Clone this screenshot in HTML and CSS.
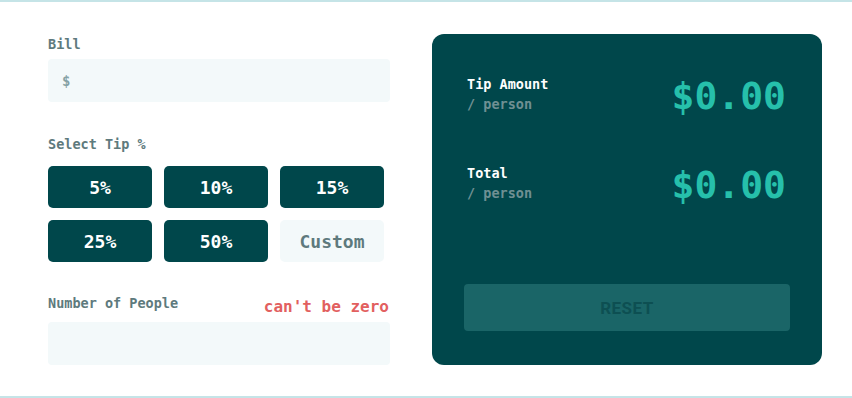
FILE: index.html
```html
<!DOCTYPE html>
<html>
<head>
  <meta charset="utf-8">
  <meta name="viewport" content="width=device-width, initial-scale=1">
  <title>Splitter</title>
  <link rel="stylesheet" href="styles.css">
</head>
<body>
  <main class="card">
    <form class="inputs">
      <label class="label" for="bill">Bill</label>
      <div class="field">
        <span class="prefix">$</span>
        <input id="bill" type="text">
      </div>

      <p class="label tip-label">Select Tip %</p>
      <div class="tips">
        <button type="button" class="tip">5%</button>
        <button type="button" class="tip">10%</button>
        <button type="button" class="tip">15%</button>
        <button type="button" class="tip">25%</button>
        <button type="button" class="tip">50%</button>
        <button type="button" class="tip custom">Custom</button>
      </div>

      <div class="people-head">
        <label class="label" for="people">Number of People</label>
        <span class="error">can't be zero</span>
      </div>
      <div class="field">
        <input id="people" type="text">
      </div>
    </form>

    <section class="result">
      <div class="row">
        <div>
          <b>Tip Amount</b>
          <span>/ person</span>
        </div>
        <strong class="amount">$0.00</strong>
      </div>
      <div class="row">
        <div>
          <b>Total</b>
          <span>/ person</span>
        </div>
        <strong class="amount">$0.00</strong>
      </div>
      <button type="button" class="reset">RESET</button>
    </section>
  </main>
</body>
</html>
```

FILE: styles.css
```css
body {
  margin: 0;
  background: #c5e4e7;
  font-family: 'DejaVu Sans Mono', 'Liberation Mono', monospace;
}

.card {
  margin-top: 2px;
  height: 394px;
  box-sizing: border-box;
  background: #fff;
  padding: 32px 30px 0 48px;
  display: grid;
  grid-template-columns: 342px 390px;
  gap: 42px;
  align-items: start;
}

.inputs {
  display: flex;
  flex-direction: column;
}

.label {
  margin: 0;
  font-size: 13.5px;
  font-weight: bold;
  line-height: 20px;
  color: #5e7a7d;
}

.field {
  margin-top: 5px;
  height: 43px;
  background: #f3f9fa;
  border-radius: 4px;
  display: flex;
  align-items: center;
  padding: 0 14px;
}

.field input {
  flex: 1;
  border: 0;
  background: transparent;
  outline: none;
}

.prefix {
  color: #85a2a5;
  font-size: 14px;
  font-weight: bold;
}

.tip-label {
  margin-top: 32px;
}

.tips {
  margin-top: 12px;
  display: grid;
  grid-template-columns: repeat(3, 104px);
  grid-auto-rows: 42px;
  gap: 12px;
}

.tip {
  border: 0;
  border-radius: 5px;
  background: #00474b;
  color: #fff;
  font-family: inherit;
  font-size: 18px;
  font-weight: bold;
  padding: 0;
}

.tip.custom {
  background: #f3f9fa;
  color: #5e7a7d;
}

.people-head {
  margin-top: 31px;
  display: flex;
  justify-content: space-between;
  align-items: flex-start;
}

.people-head + .field {
  margin-top: 5px;
}

.error {
  color: #e2605f;
  font-size: 16px;
  font-weight: bold;
  line-height: 20px;
  margin: 4px 1px 0 0;
}

.result {
  height: 331px;
  box-sizing: border-box;
  background: #00474b;
  border-radius: 12px;
  padding: 40px 32px 34px;
  display: flex;
  flex-direction: column;
  gap: 49px;
}

.row {
  display: flex;
  justify-content: space-between;
  align-items: center;
  padding: 0 4px 0 3px;
}

.row b,
.row span {
  display: block;
  font-size: 13.5px;
  font-weight: bold;
  line-height: 20px;
}

.row b {
  color: #fff;
}

.row span {
  color: #6f9093;
}

.amount {
  color: #26c0ab;
  font-size: 38px;
  line-height: 36px;
  padding-top: 4px;
}

.reset {
  margin-top: auto;
  height: 47px;
  border: 0;
  border-radius: 4px;
  background: #1a6567;
  color: #0d4f52;
  font-family: Roboto, 'Liberation Sans', sans-serif;
  font-size: 17px;
  font-weight: bold;
  letter-spacing: 0.5px;
}
```
